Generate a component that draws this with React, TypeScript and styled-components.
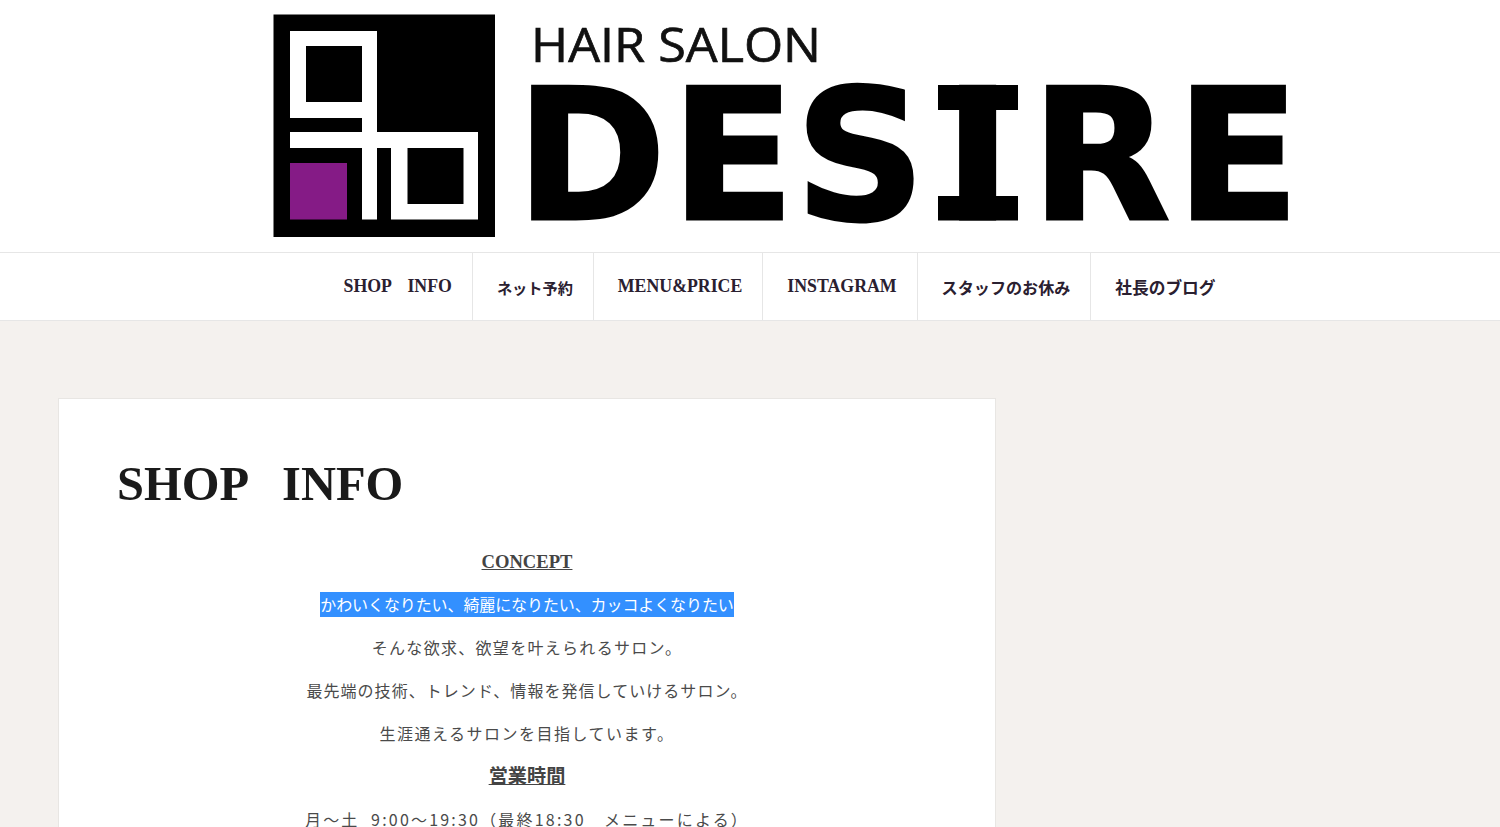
import React from 'react';
import styled, { createGlobalStyle } from 'styled-components';

const SERIF = '"Liberation Serif", "Noto Sans CJK JP", serif';
const SANS = '"Noto Sans CJK JP", "Noto Sans", sans-serif';

const GlobalStyle = createGlobalStyle`
  html, body {
    margin: 0;
    padding: 0;
    height: 827px;
    overflow: hidden;
    background: #f4f1ee;
  }
`;

const Header = styled.header`
  background: #fff;
  height: 252px;
  display: flex;
  justify-content: center;
`;

const Logo = styled.svg`
  display: block;
  width: 1076px;
  height: 252px;
`;

const Nav = styled.nav`
  background: #fff;
  height: 67px;
  border-top: 1px solid #e6e6e6;
  border-bottom: 1px solid #e6e6e6;
  display: flex;
  justify-content: center;
  padding-left: 55px;
`;

const NavItem = styled.a<{ $size: number }>`
  display: flex;
  align-items: center;
  padding: 0 20px 0 24px;
  font-family: ${SERIF};
  font-weight: 700;
  font-size: ${({ $size }) => $size}px;
  color: #2a2030;
  white-space: pre;
  border-right: 1px solid #e6e6e6;

  &:last-child {
    border-right: none;
  }
`;

const Gap = styled.span<{ $width: number }>`
  font-size: ${({ $width }) => $width}em;
`;

const Main = styled.main`
  padding: 77px 0 0 58px;
`;

const Card = styled.article`
  box-sizing: border-box;
  width: 938px;
  background: #fff;
  border: 1px solid #e8e6e3;
  padding: 52px 58px 60px;
`;

const Title = styled.h1`
  margin: 0 0 18px;
  font-family: ${SERIF};
  font-weight: 700;
  font-size: 48.5px;
  line-height: 66px;
  color: #1a1a1a;
  white-space: pre;
`;

const Line = styled.p<{ $tracking?: number }>`
  margin: 0;
  height: 43px;
  line-height: 43px;
  text-align: center;
  white-space: pre;
  font-family: ${SANS};
  font-size: 16px;
  letter-spacing: ${({ $tracking }) => $tracking ?? 0}px;
  color: #4a4a4a;
`;

const Heading = styled.u<{ $size: number }>`
  font-family: ${SERIF};
  font-weight: 700;
  font-size: ${({ $size }) => $size}px;
  color: #444;
`;

const Selected = styled.span`
  display: inline-block;
  line-height: 25px;
  letter-spacing: -0.1px;
  background: #3390ff;
  color: #fff;
`;

const navItems = [
  { label: 'SHOP', rest: 'INFO', size: 17.8 },
  { label: 'ネット予約', size: 15.2 },
  { label: 'MENU&PRICE', size: 17.8 },
  { label: 'INSTAGRAM', size: 17.8 },
  { label: 'スタッフのお休み', size: 16.1 },
  { label: '社長のブログ', size: 16.7 },
];

const App = () => {
  return (
    <>
      <GlobalStyle />
      <Header>
        <Logo viewBox="212 0 1076 252">
          <rect x="273.5" y="14.5" width="221.5" height="222.5" fill="#000" />
          <rect x="290" y="31" width="87" height="87" fill="#fff" />
          <rect x="306" y="46" width="56" height="56" fill="#000" />
          <rect x="362" y="118" width="15" height="101.5" fill="#fff" />
          <rect x="290" y="132" width="188" height="16" fill="#fff" />
          <rect x="391" y="132" width="87" height="87.5" fill="#fff" />
          <rect x="407.5" y="148" width="56" height="56" fill="#000" />
          <rect x="290" y="163" width="57" height="56.5" fill="#851b86" />
          <text x="531" y="62" fontFamily='"Open Sans", "Noto Sans", sans-serif' fontSize="47" textLength="290" lengthAdjust="spacingAndGlyphs" fill="#111" stroke="#111" strokeWidth="0.7">
            HAIR SALON
          </text>
          <text x="516 671 795 944 1031 1176" y="219" fontFamily='"DejaVu Sans", Verdana, sans-serif' fontWeight="700" fontSize="181" fill="#000" stroke="#000" strokeWidth="3">
            DESIRE
          </text>
          {/* the I in the logo has slab ends */}
          <rect x="938" y="85" width="80" height="25" fill="#000" />
          <rect x="938" y="196" width="80" height="24.5" fill="#000" />
        </Logo>
      </Header>
      <Nav>
        {navItems.map((item) => (
          <NavItem key={item.label} $size={item.size}>
            {item.label}
            {item.rest && <Gap $width={0.87}>　</Gap>}
            {item.rest}
          </NavItem>
        ))}
      </Nav>
      <Main>
        <Card>
          <Title>
            SHOP<Gap $width={0.68}>　</Gap>INFO
          </Title>
          <Line>
            <Heading $size={18.6}>CONCEPT</Heading>
          </Line>
          <Line>
            <Selected>かわいくなりたい、綺麗になりたい、カッコよくなりたい</Selected>
          </Line>
          <Line $tracking={1.3}>そんな欲求、欲望を叶えられるサロン。</Line>
          <Line $tracking={1.05}>最先端の技術、トレンド、情報を発信していけるサロン。</Line>
          <Line $tracking={1.5}>生涯通えるサロンを目指しています。</Line>
          <Line>
            <Heading $size={19.2}>営業時間</Heading>
          </Line>
          <Line $tracking={2.2}>月～土  9:00～19:30（最終18:30　メニューによる）</Line>
        </Card>
      </Main>
    </>
  );
};

export default App;
